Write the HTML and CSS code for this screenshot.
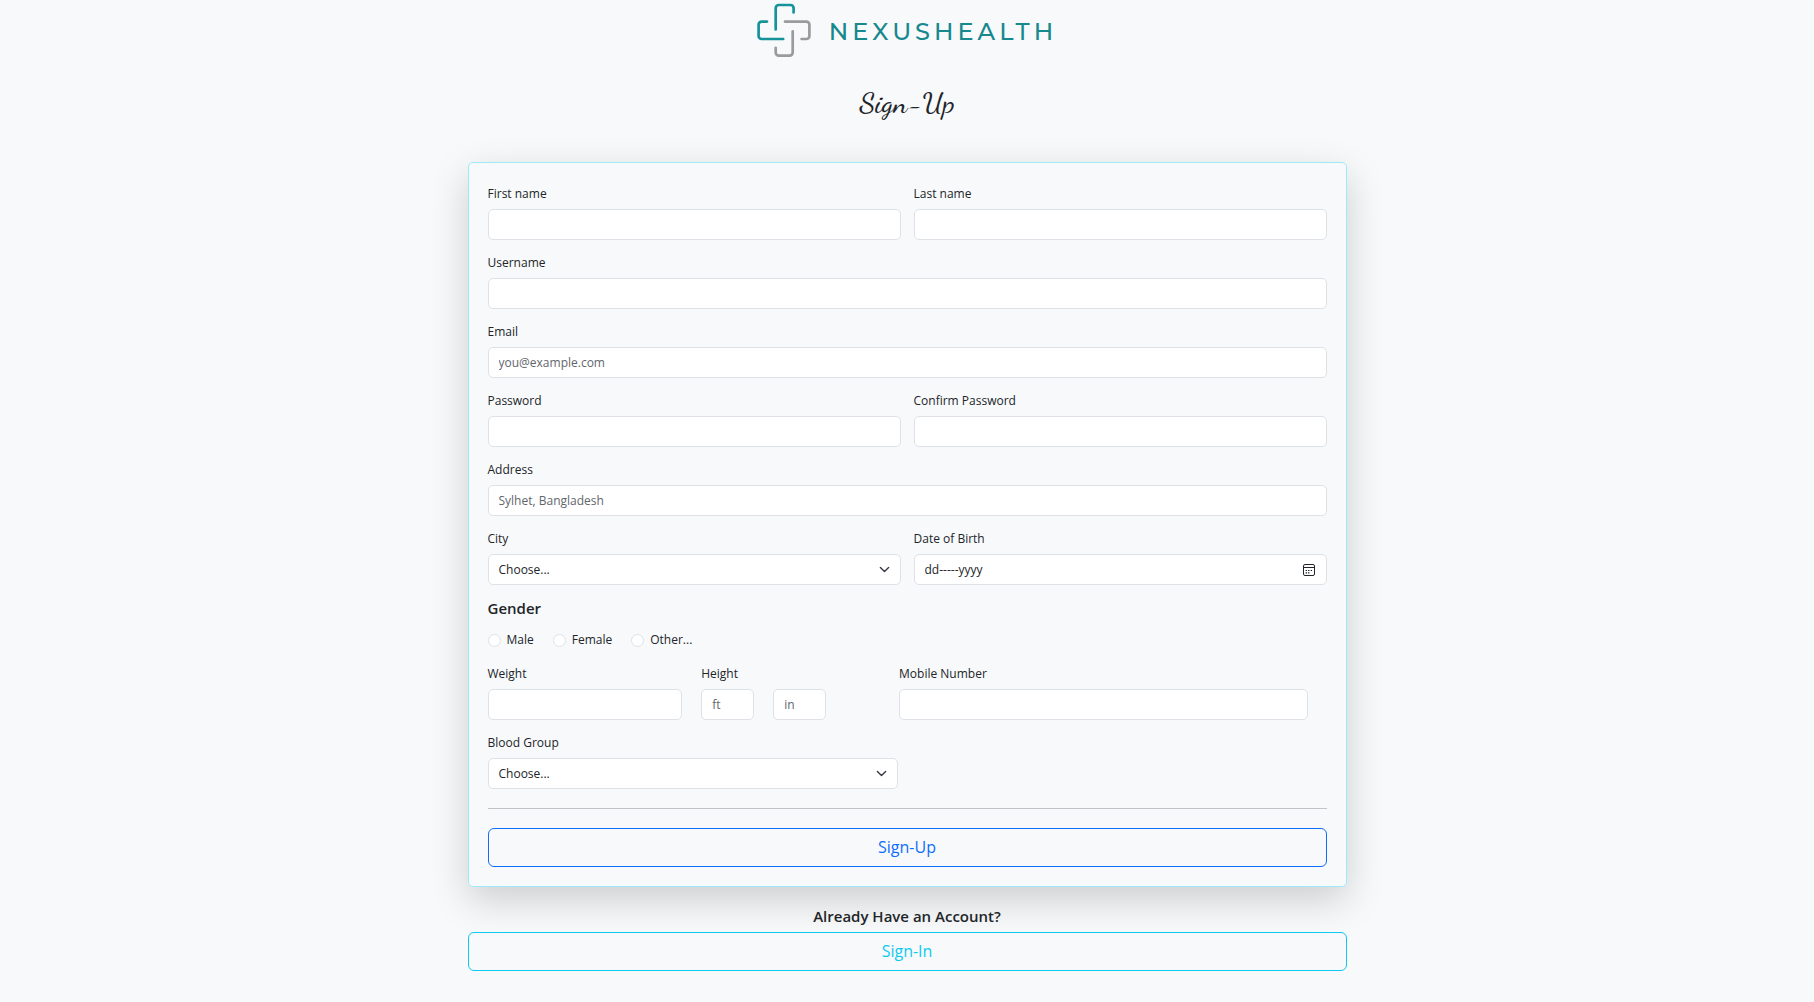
FILE: index.html
```html
<!DOCTYPE html>
<html lang="en">
<head>
<meta charset="utf-8">
<meta name="viewport" content="width=device-width, initial-scale=1">
<title>NexusHealth | Sign-Up</title>
<link rel="stylesheet" href="styles.css">
</head>
<body>
<div class="page">
  <header class="header">
    <div class="brand">
      <svg class="brand-mark" viewBox="0 0 54 54" fill="none" stroke-width="2.7" stroke-linecap="round" stroke-linejoin="round" aria-hidden="true">
        <path stroke="#16939a" d="M36.6 9.5V5a3 3 0 0 0-3-3H21.7a3 3 0 0 0-3 3v21.5"/>
        <path stroke="#16939a" d="M10 18.6H4.6a3 3 0 0 0-3 3V33a3 3 0 0 0 3 3h21.6"/>
        <path stroke="#999b9d" d="M28 18.6h21.4a3 3 0 0 1 3 3V33a3 3 0 0 1-3 3h-4.8"/>
        <path stroke="#999b9d" d="M35.7 28.4v21.2a3 3 0 0 1-3 3H21.7a3 3 0 0 1-3-3v-4.8"/>
      </svg>
      <span class="brand-name">NEXUSHEALTH</span>
    </div>
    <h1 class="title">Sign-Up</h1>
  </header>

  <main>
    <form class="card">
      <div class="grid">
        <div class="field">
          <label for="first">First name</label>
          <input class="control" id="first" type="text">
        </div>
        <div class="field">
          <label for="last">Last name</label>
          <input class="control" id="last" type="text">
        </div>
        <div class="field wide">
          <label for="username">Username</label>
          <input class="control" id="username" type="text">
        </div>
        <div class="field wide">
          <label for="email">Email</label>
          <input class="control" id="email" type="email" placeholder="you@example.com">
        </div>
        <div class="field">
          <label for="password">Password</label>
          <input class="control" id="password" type="password">
        </div>
        <div class="field">
          <label for="confirm">Confirm Password</label>
          <input class="control" id="confirm" type="password">
        </div>
        <div class="field wide">
          <label for="address">Address</label>
          <input class="control" id="address" type="text" placeholder="Sylhet, Bangladesh">
        </div>
        <div class="field">
          <label for="city">City</label>
          <select class="control select" id="city"><option>Choose...</option></select>
        </div>
        <div class="field">
          <label for="birth">Date of Birth</label>
          <div class="date">
            <input class="control" id="birth" type="text" placeholder="dd-----yyyy">
            <button class="date-button" type="button" aria-label="Open calendar">
              <svg viewBox="0 0 14 14" width="14" height="14" fill="none" stroke="#212529" aria-hidden="true">
                <rect x="1.5" y="1.5" width="11" height="11" rx="1.5"/>
                <path d="M1.5 4.5h11"/>
                <path d="M6 7.5h1.4M8.6 7.5H10M3.6 9.8H5M6 9.8h1.4M3.6 7.5H5" stroke-width="1.2"/>
              </svg>
            </button>
          </div>
        </div>
      </div>

      <div class="gender" role="radiogroup" aria-labelledby="gender">
        <h2 class="subtitle" id="gender">Gender</h2>
        <div class="choices">
          <label class="choice"><input type="radio" name="gender">Male</label>
          <label class="choice"><input type="radio" name="gender">Female</label>
          <label class="choice"><input type="radio" name="gender">Other...</label>
        </div>
      </div>

      <div class="measures">
        <div class="field">
          <label for="weight">Weight</label>
          <input class="control" id="weight" type="text">
        </div>
        <div class="field">
          <label for="feet">Height</label>
          <input class="control" id="feet" type="text" placeholder="ft">
        </div>
        <div class="field">
          <input class="control" type="text" placeholder="in" aria-label="Height, inches">
        </div>
        <div class="field mobile">
          <label for="mobile">Mobile Number</label>
          <input class="control" id="mobile" type="tel">
        </div>
      </div>

      <div class="halves">
        <div class="field">
          <label for="blood">Blood Group</label>
          <select class="control select" id="blood"><option>Choose...</option></select>
        </div>
      </div>

      <hr class="rule">
      <button class="button primary" type="submit">Sign-Up</button>
    </form>

    <section class="account">
      <h2 class="subtitle">Already Have an Account?</h2>
      <a class="button info" href="#">Sign-In</a>
    </section>
  </main>
</div>
</body>
</html>
```
FILE: styles.css
```css
* {
  box-sizing: border-box;
}

body {
  margin: 0;
  background: #f8f9fb;
  color: #212529;
  font-family: "Segoe UI", "Open Sans", "Noto Sans", sans-serif;
  font-size: 12px;
  line-height: 22px;
}

.page {
  max-width: 879px;
  margin: 0 auto;
}

.header {
  display: flex;
  flex-direction: column;
  align-items: center;
  gap: 24px;
  padding: 3px 0 38px;
}

.brand {
  display: flex;
  align-items: center;
  gap: 18px;
}

.brand-mark {
  width: 54px;
  height: 54px;
}

.brand-name {
  padding-top: 4px;
  color: #16888e;
  font-family: Montserrat, Lato, sans-serif;
  font-size: 24px;
  font-weight: 500;
  line-height: 32px;
  letter-spacing: 4px;
}

.title {
  margin: 0;
  font-family: "Dancing Script", "Liberation Serif", cursive;
  font-size: 29px;
  font-weight: 500;
  line-height: 43px;
}

.card {
  padding: 20px 19px 19px;
  border: 1px solid #9eeaf9;
  border-radius: 5px;
  background: #f8f9fb;
  box-shadow: 0 13px 38px rgba(0, 0, 0, 0.175);
}

.grid {
  display: grid;
  grid-template-columns: 1fr 1fr;
  gap: 12px 13px;
}

.wide {
  grid-column: 1 / -1;
}

.field {
  display: flex;
  flex-direction: column;
  justify-content: flex-end;
  gap: 4px;
  min-width: 0;
}

.control {
  width: 100%;
  height: 31px;
  padding: 4px 10px;
  border: 1px solid #dee2e6;
  border-radius: 5px;
  background-color: #fff;
  color: #212529;
  font: inherit;
}

.control::placeholder {
  color: #5f666c;
  opacity: 1;
}

.select {
  appearance: none;
  background-image: url("data:image/svg+xml,%3Csvg xmlns='http://www.w3.org/2000/svg' viewBox='0 0 16 16'%3E%3Cpath fill='none' stroke='%23343a40' stroke-linecap='round' stroke-linejoin='round' stroke-width='2' d='m2 5 6 6 6-6'/%3E%3C/svg%3E");
  background-position: right 10px center;
  background-repeat: no-repeat;
  background-size: 11px 11px;
}

.date {
  position: relative;
}

.date .control {
  display: block;
}

.date .control::placeholder {
  color: #212529;
}

.date-button {
  position: absolute;
  top: 0;
  right: 11px;
  display: flex;
  align-items: center;
  height: 31px;
  padding: 0;
  border: 0;
  background: none;
}

.gender {
  padding: 13px 0 12px;
}

.subtitle {
  margin: 0 0 11px;
  font-size: 15px;
  font-weight: 600;
  line-height: 20px;
}

.choices {
  display: flex;
  gap: 19px;
}

.choice {
  display: flex;
  align-items: center;
  gap: 6px;
}

.choice input {
  appearance: none;
  width: 13px;
  height: 13px;
  margin: 0;
  border: 1px solid #dee2e6;
  border-radius: 50%;
  background: #fff;
}

.measures {
  display: grid;
  grid-template-columns: 195fr 53fr 53fr 35fr 410fr;
  gap: 19px;
  padding-right: 18px;
}

.mobile {
  grid-column: 5;
}

.halves {
  display: grid;
  grid-template-columns: 1fr 1fr;
  gap: 19px;
  padding-top: 12px;
}

.rule {
  margin: 19px 0;
  border: 0;
  border-top: 1px solid #c1c4c7;
}

.button {
  display: block;
  width: 100%;
  padding: 8px;
  border: 1px solid;
  border-radius: 6px;
  background: transparent;
  font: inherit;
  font-size: 16px;
  line-height: 21px;
  text-align: center;
  text-decoration: none;
}

.primary {
  border-color: #0d6efd;
  color: #0d6efd;
}

.info {
  border-color: #0dcaf0;
  color: #0dcaf0;
}

.account {
  padding: 19px 0 31px;
  text-align: center;
}

.account .subtitle {
  margin-bottom: 6px;
}
```
